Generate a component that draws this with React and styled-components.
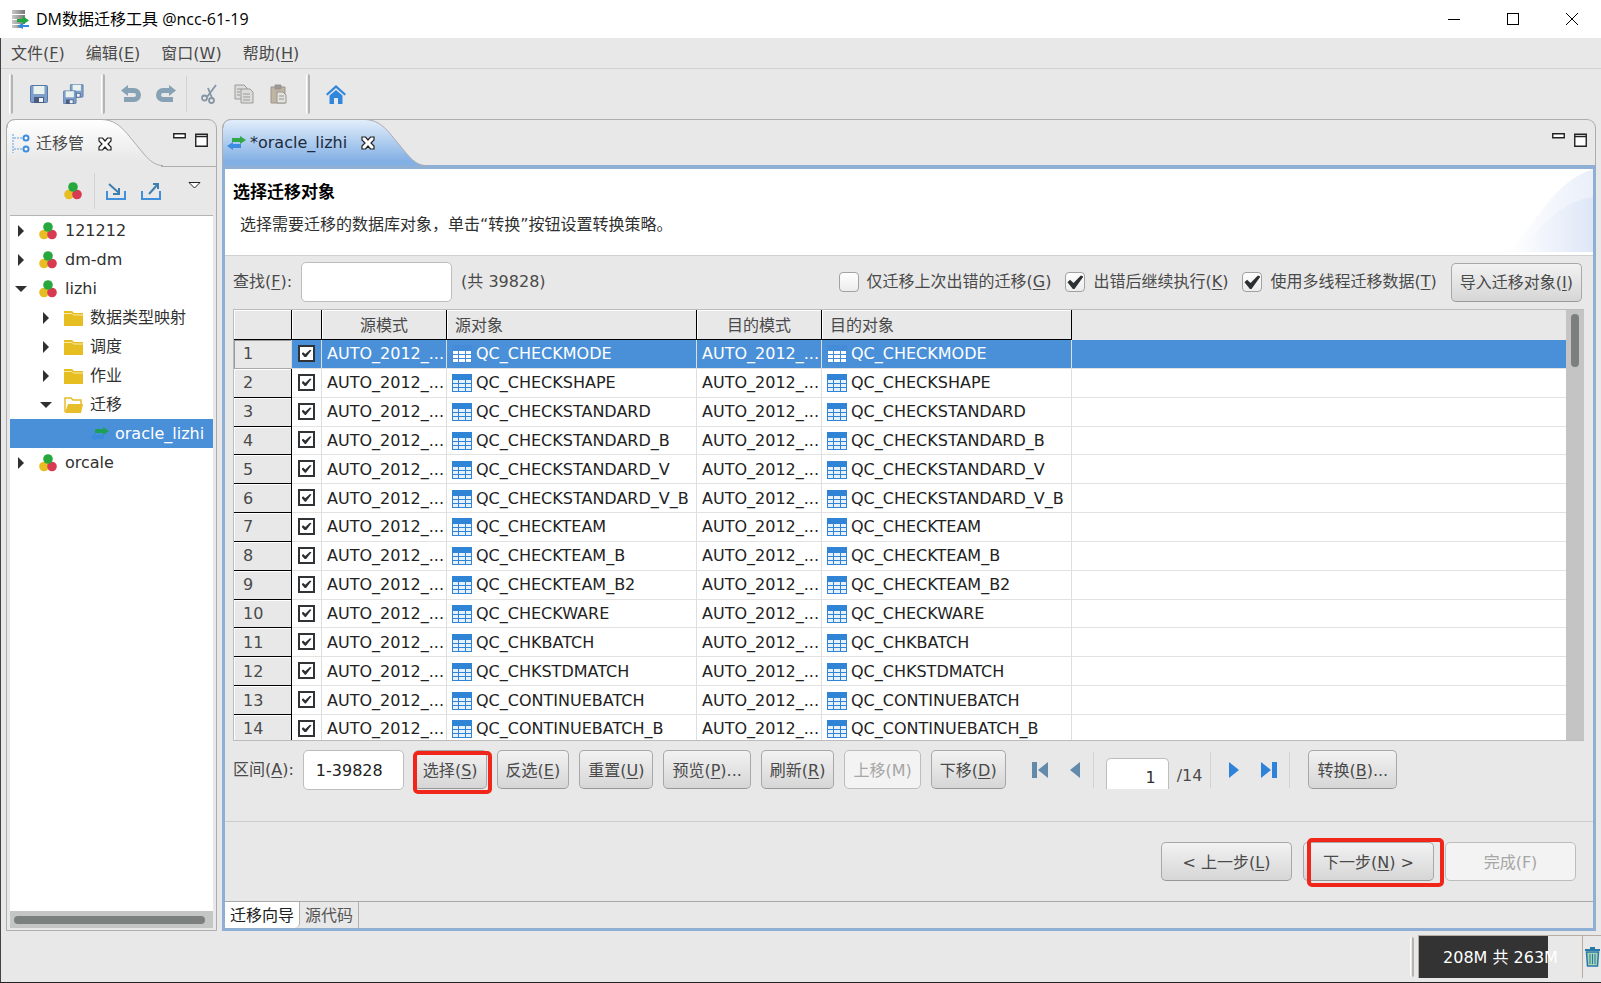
import React from "react";
import styled, { createGlobalStyle, css } from "styled-components";

const Global = createGlobalStyle`
  *, *::before, *::after { box-sizing: border-box; }
  body { margin: 0; }
  body, button, input {
    font-family: "DejaVu Sans", "Noto Sans CJK SC", sans-serif;
    font-size: 16px;
    line-height: 22px;
    color: #4a4a4a;
  }
  u { text-underline-offset: 2px; text-decoration-thickness: 1px; }
`;

const face = "#e8e8e8";
const select = "#4a90d9";

/* ---------- window frame ---------- */
const Window = styled.div`
  display: flex;
  flex-direction: column;
  height: 100vh;
  background: ${face};
  border-bottom: 1px solid #222;
`;
const TitleBar = styled.header`
  display: flex;
  align-items: center;
  flex: none;
  height: 38px;
  padding-left: 11px;
  background: #fff;
`;
const WindowTitle = styled.h1`
  flex: 1;
  margin: 0 0 0 7px;
  font: 400 16px/22px "Open Sans", "Noto Sans CJK SC", sans-serif;
  color: #000;
`;
const WindowButton = styled.button`
  display: grid;
  place-items: center;
  width: 59px;
  height: 38px;
  padding: 0;
  border: 0;
  background: none;
`;
const Frame = styled.div`
  display: flex;
  flex-direction: column;
  flex: 1;
  min-height: 0;
  border-left: 1px solid #444;
`;
const MenuBar = styled.nav`
  display: flex;
  align-items: center;
  flex: none;
  height: 31px;
  gap: 21px;
  padding: 2px 0 0 10px;
  border-bottom: 1px solid #d0d0d0;
`;
const MenuButton = styled.button`
  padding: 0;
  border: 0;
  background: none;
`;
const ToolBar = styled.div`
  display: flex;
  align-items: center;
  flex: none;
  height: 50px;
  padding-left: 8px;
`;
const Handle = styled.span`
  width: 4px;
  height: 40px;
  border-left: 1px solid #fff;
  border-right: 2px solid #b4b4b4;
  border-radius: 2px;
`;
const Separator = styled.span`
  width: 1px;
  height: 36px;
  background: #d2d2d2;
`;
const ToolGroup = styled.div`
  display: flex;
  align-items: center;
  padding: 0 ${(p) => p.$end || 8}px 0 ${(p) => p.$start || 8}px;
`;
const IconButton = styled.button`
  display: grid;
  place-items: center;
  width: ${(p) => p.$w || 35}px;
  height: 32px;
  padding: 0;
  border: 0;
  background: none;
  svg { display: block; }
`;

/* ---------- panels ---------- */
const Main = styled.main`
  display: flex;
  flex: 1;
  min-height: 0;
  gap: 5px;
  padding: 0 5px 1px;
`;
const SidePanel = styled.aside`
  display: flex;
  flex-direction: column;
  flex: none;
  width: 211px;
  border: 1px solid #adadad;
  border-radius: 9px 9px 0 0;
`;
const EditorPanel = styled.section`
  display: flex;
  flex-direction: column;
  flex: 1;
  min-width: 0;
`;
const PanelHead = styled.div`
  display: flex;
  justify-content: space-between;
  flex: none;
  height: 46px;
  ${(p) => p.$framed && css`
    border: 1px solid #adadad;
    border-bottom: 0;
    border-radius: 9px 9px 0 0;
  `}
`;
const PanelTab = styled.div`
  position: relative;
  display: flex;
  align-items: center;
  height: 100%;
  padding: 1px 0 0 4px;
  gap: 4px;
`;
const TabShape = styled.svg`
  position: absolute;
  left: 0;
  top: -1px;
  z-index: 0;
`;
const TabLabel = styled.span`
  position: relative;
  color: ${(p) => p.$color || "#4a4a4a"};
`;
const TabIcon = styled.span`
  position: relative;
  display: grid;
  width: ${(p) => p.$w || 19}px;
`;
const TabClose = styled.button`
  position: relative;
  display: grid;
  padding: 0;
  margin-left: 10px;
  border: 0;
  background: none;
`;
const PanelControls = styled.div`
  display: flex;
  align-items: flex-start;
  gap: 9px;
  padding: 13px 8px 0 0;
`;
const PanelControl = styled.button`
  display: grid;
  padding: 0;
  border: 0;
  background: none;
`;
/* line that continues the side tab's curve to the panel edge */
const SideRule = styled.div`
  display: flex;
  justify-content: flex-end;
  flex: none;
  height: 1px;
  span { width: 55px; background: #adadad; }
`;
const SideTools = styled.div`
  display: flex;
  align-items: center;
  flex: none;
  height: 48px;
  padding-left: 48px;
`;
const SideSeparator = styled(Separator)`
  margin: 0 3px;
`;
const ViewMenu = styled.button`
  display: grid;
  margin: 0 0 12px 20px;
  padding: 0;
  border: 0;
  background: none;
`;

/* ---------- tree ---------- */
const Tree = styled.ul`
  flex: 1;
  min-height: 0;
  margin: 0 3px;
  padding: 0;
  list-style: none;
  overflow: hidden;
  background: #fff;
  border-top: 1px solid #b4b4b4;
`;
const TreeRow = styled.li`
  display: flex;
  align-items: center;
  height: 29px;
  gap: ${(p) => (p.$level === 0 ? 8 : 6)}px;
  padding-left: ${(p) => [3, 28, 54][p.$level]}px;
  white-space: nowrap;
  color: ${(p) => (p.$selected ? "#fff" : "#303030")};
  background: ${(p) => (p.$selected ? select : "transparent")};
`;
const Twisty = styled.span`
  display: flex;
  align-items: center;
  padding-left: 3px;
  width: ${(p) => (p.$level === 0 ? 18 : 20)}px;
  padding-left: 2px;
`;
const HScroll = styled.div`
  flex: none;
  height: 17px;
  margin: 0 3px 2px;
  padding: 5px 8px 4px 4px;
  background: #c4c6c5;
`;
const ScrollThumb = styled.div`
  width: 100%;
  height: ${(p) => p.$h}px;
  border-radius: 4px;
  background: #7b7f7e;
`;

/* ---------- editor ---------- */
const EditorBody = styled.div`
  display: flex;
  flex-direction: column;
  flex: 1;
  min-height: 0;
  border: 3px solid #8fb0d4;
  border-top-width: 4px;
`;
const PageHead = styled.div`
  display: flex;
  justify-content: space-between;
  flex: none;
  height: 87px;
  background: #fff;
  border-bottom: 1px solid #d0d0d0;
`;
const PageText = styled.div`
  padding: 12px 8px;
`;
const PageTitle = styled.h2`
  margin: 0 0 11px;
  font-size: 17px;
  line-height: 22px;
  font-weight: 700;
  color: #000;
`;
const PageNote = styled.p`
  margin: 0 0 0 7px;
  color: #303030;
`;
const Content = styled.div`
  display: flex;
  flex-direction: column;
  flex: 1;
  min-height: 0;
  padding: 6px 9px 31px 8px;
`;
const SearchRow = styled.div`
  display: flex;
  align-items: center;
  flex: none;
  height: 40px;
  margin-bottom: 7px;
  white-space: nowrap;
`;
const Options = styled.div`
  display: flex;
  align-items: center;
  gap: 14px;
  margin-left: auto;
  padding-right: 2px;
`;
const FieldLabel = styled.label`
  margin-right: 9px;
  line-height: 40px;
`;
const TextField = styled.input`
  width: ${(p) => p.$w}px;
  height: 40px;
  padding: 0 12px;
  border: 1px solid #bdbdbd;
  border-radius: 5px;
  background: #fff;
  color: #222;
`;
const Total = styled.span`
  margin-left: 9px;
`;
const Option = styled.label`
  display: flex;
  align-items: center;
  gap: 8px;
`;
const checkMark = css`
  &:checked::before {
    content: "";
    width: ${(p) => (p.$small ? 10 : 16)}px;
    height: ${(p) => (p.$small ? 8 : 14)}px;
    background: #2c3033;
    clip-path: polygon(0 52%, 16% 34%, 38% 58%, 84% 4%, 100% 10%, 44% 100%, 34% 100%);
  }
`;
const OptionBox = styled.input`
  appearance: none;
  display: grid;
  place-items: center;
  width: 20px;
  height: 20px;
  margin: 0;
  border: 1px solid #a2a2a2;
  border-radius: 4px;
  background: linear-gradient(#fff, #ececec);
  ${checkMark}
`;
const Button = styled.button`
  flex: none;
  width: ${(p) => (p.$wide ? "131px" : "auto")};
  height: 39px;
  padding: 2px 8px 0;
  border: 1px solid #a8a8a8;
  border-bottom-color: #989898;
  border-radius: 5px;
  background: linear-gradient(#f2f2f2, #d6d6d6);
  white-space: nowrap;
  color: #4a4a4a;
  &:disabled {
    color: #a6a6a6;
    background: #f3f3f3;
    border-color: #bdbdbd;
  }
`;
const Marked = styled.div`
  position: relative;
  display: flex;
`;
const MarkFrame = styled.span`
  position: absolute;
  inset: ${(p) => p.$inset};
  border: 4px solid #f0261a;
  border-radius: 5px;
  pointer-events: none;
`;

/* ---------- grid ---------- */
const GridBox = styled.div`
  display: flex;
  flex: 1;
  min-height: 0;
  overflow: hidden;
  border: 1px solid #bcbcbc;
  border-right: 0;
`;
const GridView = styled.div`
  flex: 1;
  min-width: 0;
  overflow: hidden;
  background: #fff;
`;
const VScroll = styled.div`
  flex: none;
  width: 18px;
  padding: 4px 5px;
  background: #c4c4c4;
`;
/* the last row runs a little below the visible area */
const Grid = styled.table`
  width: 100%;
  height: calc(100% + 4px);
  table-layout: fixed;
  border-collapse: separate;
  border-spacing: 0;
`;
const HeadCell = styled.th`
  height: 30px;
  padding: 3px 8px 0;
  font-weight: 400;
  text-align: ${(p) => p.$align || "center"};
  background: ${face};
  ${(p) => !p.$rest && css`
    border-right: 1px solid #000;
    border-bottom: 1px solid #000;
    box-shadow: inset 1px 1px #fff;
  `}
`;
const NumberCell = styled.th`
  padding: 1px 8px 0 9px;
  font-weight: 400;
  text-align: left;
  color: #4a4a4a;
  background: ${face};
  border-right: ${(p) => (p.$current ? "1px solid #d8d8d8" : "1px solid #000")};
  border-bottom: 1px solid ${(p) => (p.$current ? "#a8a8a8" : "#000")};
  box-shadow: inset 1px 1px ${(p) => (p.$current ? "#999" : "#fff")};
`;
const Row = styled.tr`
  color: ${(p) => (p.$selected ? "#fff" : "#222")};
  background: ${(p) => (p.$selected ? select : "#fff")};
`;
const Cell = styled.td`
  height: 28px;
  padding: 1px 0 0 5px;
  overflow: hidden;
  white-space: nowrap;
  line-height: 20px;
  border-right: 1px solid #dedede;
  border-bottom: 1px solid #e2e2e2;
  &:last-child { border-right: 0; }
`;
const ObjectName = styled.span`
  display: flex;
  align-items: center;
  gap: 4px;
`;
const RowCheck = styled.input`
  appearance: none;
  display: grid;
  place-items: center;
  width: 17px;
  height: 17px;
  margin: 0 0 2px 1px;
  border: 2px solid #303436;
  background: #fff;
  ${checkMark}
`;

/* ---------- footer rows ---------- */
const Actions = styled.div`
  display: flex;
  flex: none;
  height: 40px;
  margin-top: 9px;
  gap: 10px;
  white-space: nowrap;
`;
const RangeField = styled.div`
  display: flex;
`;
const Pager = styled.div`
  display: flex;
  align-items: center;
  height: 39px;
  padding: 0 8px 0 7px;
`;
const PageField = styled.input`
  align-self: flex-end;
  width: 63px;
  height: 31px;
  margin: 0 8px 0 12px;
  padding: 6px 12px 0;
  text-align: right;
  border: 1px solid #bdbdbd;
  border-bottom: 0;
  border-radius: 5px 5px 0 0;
  background: #fff;
  color: #303030;
`;
const PageCount = styled.span`
  padding: 12px 8px 0 0;
`;
const Wizard = styled.div`
  display: flex;
  justify-content: flex-end;
  flex: none;
  gap: 11px;
  padding: 20px 17px;
  border-top: 1px solid #cdcdcd;
`;
const BottomTabs = styled.div`
  display: flex;
  flex: none;
  height: 27px;
  border-top: 1px solid #a8a8a8;
`;
const BottomTab = styled.button`
  padding: 1px 5px 0;
  border: 0;
  border-right: 1px solid #b0b0b0;
  border-radius: 0 0 ${(p) => (p.$active ? 5 : 0)}px 0;
  background: ${(p) => (p.$active ? "#fff" : "transparent")};
  color: ${(p) => (p.$active ? "#202020" : "#555")};
`;
const StatusBar = styled.footer`
  display: flex;
  justify-content: flex-end;
  flex: none;
  height: 50px;
  padding: 3px 0 4px;
`;
const StatusHandle = styled(Handle)`
  align-self: center;
  margin-right: 4px;
`;
const Heap = styled.div`
  width: 165px;
  border: 1px solid #b5aca4;
  border-bottom: 0;
  color: #fff;
  line-height: 44px;
  text-align: center;
  background: linear-gradient(to right, #333 79%, ${face} 79%);
`;
const TrashButton = styled(IconButton)`
  height: 43px;
  border-top: 1px solid #b5aca4;
`;

/* ---------- drawings ---------- */
const Logo = () => (
  <svg width="18" height="19" viewBox="0 0 18 19">
    <defs>
      <linearGradient id="server">
        <stop offset="0" stopColor="#c8c8c8" />
        <stop offset="1" stopColor="#777" />
      </linearGradient>
    </defs>
    <path d="M1 0h13v4H1zM1 5h13v4H1zM1 10h13v4H1zM1 15h11v3H1z" fill="url(#server)" />
    <path d="M6 9h6V6l6 4.500l-6 4V12H6z" fill="#20a840" />
    <path d="M18 15h-6v-2l-6 3l6 3v-2h6z" fill="#3388dd" />
  </svg>
);
const Arrows = ({ dim }) => (
  <svg width="19" height="14" viewBox="0 0 19 14">
    <path d="M5 2h8V0l6 4l-6 4V6H5z" fill={dim ? "#1e9f58" : "#2fa84a"} />
    <path d="M14 8H6V6L0 10l6 4v-2h8z" fill={dim ? "#3a8cdb" : "#3d8de0"} />
  </svg>
);
const Balls = () => (
  <svg width="18" height="18" viewBox="0 0 18 18">
    <circle cx="5" cy="12.500" r="4.800" fill="#e6bd22" />
    <circle cx="13" cy="12.500" r="4.800" fill="#d83a52" />
    <circle cx="9" cy="5" r="4.800" fill="#27a83c" />
  </svg>
);
const Folder = ({ open }) => (
  <svg width="20" height="18" viewBox="0 0 20 18">
    {open ? (
      <>
        <path d="M1 16V2h6l2 2h8v4" fill="#fff" stroke="#e4bb26" strokeWidth="1.500" />
        <path d="M4 8h15l-2 9H1z" fill="#e6be2a" />
      </>
    ) : (
      <>
        <path d="M0 2h8l2 2h9v13H0z" fill="#e6be22" />
        <path d="M0 4.500h8l1.500 1.500H19" fill="none" stroke="#f7e9a8" />
      </>
    )}
  </svg>
);
const TableIcon = ({ selected }) => (
  <svg width="20" height="18" viewBox="0 0 20 18">
    <rect width="20" height="18" fill={selected ? "#448cd8" : "#2f84d6"} />
    <path
      d="M1 6h5v3H1zM7 6h6v3H7zM14 6h5v3h-5zM1 10h5v3H1zM7 10h6v3H7zM14 10h5v3h-5zM1 14h5v3H1zM7 14h6v3H7zM14 14h5v3h-5z"
      fill={selected ? "#fff" : "#e6f1fc"}
    />
  </svg>
);
const Triangle = ({ open }) => (
  <svg width="12" height="12" viewBox="0 0 12 12">
    <path d={open ? "M0 3h12L6 9z" : "M3 0l6 6l-6 6z"} fill="#303030" />
  </svg>
);
const CloseMark = () => (
  <svg width="14" height="14" viewBox="0 0 14 14">
    <path d="M1 1h3.500L7 4l2.500-3H13v3L10 7l3 3v3H9.500L7 10l-2.500 3H1v-3l3-3l-3-3z" fill="#fff" stroke="#222" strokeWidth="1.200" />
  </svg>
);
const MinMark = () => (
  <svg width="13" height="6" viewBox="0 0 13 6">
    <path d="M.75.75h11.500v4H.75z" fill="#fff" stroke="#222" strokeWidth="1.400" />
  </svg>
);
const MaxMark = () => (
  <svg width="13" height="14" viewBox="0 0 13 14">
    <path d="M.75 1.250h11.500v12H.75zM.75 3.500h11.500" fill="#fff" stroke="#222" strokeWidth="1.400" />
  </svg>
);
const TreeMark = () => (
  <svg width="19" height="19" viewBox="0 0 19 19">
    <path d="M2 0v19M3 4h9M3 15h9" stroke="#5a9ee4" strokeDasharray="2 1" fill="none" />
    <circle cx="15" cy="4" r="2.500" fill="#fff" stroke="#3f8ddd" strokeWidth="2" />
    <circle cx="15" cy="15" r="2.500" fill="#fff" stroke="#3f8ddd" strokeWidth="2" />
  </svg>
);
const DiskShape = ({ x = 0, y = 0, s = 1 }) => (
  <g transform={`translate(${x} ${y}) scale(${s})`}>
    <rect x=".5" y=".5" width="17" height="17" rx="1" fill="#7d9fca" stroke="#5478a8" />
    <rect x="3.500" y="1" width="11" height="8" fill="#eaf2ee" />
    <rect x="4" y="12" width="10" height="6" fill="#4a5c80" />
    <rect x="9" y="13" width="4" height="4" fill="#f0f3f8" />
  </g>
);
const Save = () => (
  <svg width="18" height="18" viewBox="0 0 18 18"><DiskShape /></svg>
);
const SaveAll = () => (
  <svg width="21" height="20" viewBox="0 0 21 20">
    <DiskShape x={7} s={0.75} />
    <DiskShape y={6.5} s={0.75} />
  </svg>
);
const Turn = ({ flip }) => (
  <svg width="20" height="18" viewBox="0 0 20 18">
    <g transform={flip ? "matrix(-1 0 0 1 20 0)" : undefined}>
      <path d="M6 5.500h7a4.500 4.500 0 0 1 0 9H3" fill="none" stroke="#86a2b4" strokeWidth="5" />
      <path d="M0 5.500l7-5.500v11z" fill="#86a2b4" />
    </g>
  </svg>
);
const Cut = () => (
  <svg width="16" height="20" viewBox="0 0 16 20" fill="none" stroke="#8796a4" strokeWidth="1.800">
    <path d="M15 1L6 13M7 4l4 10" />
    <circle cx="3.500" cy="14" r="2.500" />
    <circle cx="10.500" cy="16.500" r="2.500" />
  </svg>
);
const Copy = () => (
  <svg width="20" height="20" viewBox="0 0 20 20" fill="#dcdcda" stroke="#9a9a98">
    <path d="M1 1h9l3 3v11H1z" />
    <path d="M7 5h9l3 3v11H7z" />
    <path d="M3 5h4M3 8h3M3 11h3M9 10h7M9 13h7M9 16h7" />
  </svg>
);
const Paste = () => (
  <svg width="17" height="20" viewBox="0 0 17 20" stroke="#9a958c">
    <path d="M1 3h14v16H1z" fill="#c0b5a4" />
    <path d="M5 1h6v4H5z" fill="#999" />
    <path d="M7 8h6l3 3v8H7z" fill="#e2e2e0" />
    <path d="M9 12h5M9 15h5" />
  </svg>
);
const Home = () => (
  <svg width="20" height="19" viewBox="0 0 20 19">
    <path d="M0 9L10 0l10 9l-1.500 1.500L10 3L1.500 10.500z" fill="#2f86dc" />
    <path d="M3.500 10.500L10 5l6.500 5.500V19H12v-6H8v6H3.500z" fill="#2f86dc" />
  </svg>
);
const Transfer = ({ out }) => (
  <svg width="20" height="18" viewBox="0 0 20 18" fill="none" stroke="#3f8fdc" strokeWidth="2">
    <path d="M1 9v8h18V9" />
    {out ? <path d="M8 12l9-10M12 2h5v5" stroke="#3f7fb0" /> : <path d="M3 2l10 9M13 6v6H7" stroke="#3f7fb0" />}
  </svg>
);
const PageArrow = ({ back, bar, dim }) => (
  <svg width={bar ? 16 : 10} height="16" viewBox={bar ? "0 0 16 16" : "0 0 10 16"}>
    <g transform={back ? `matrix(-1 0 0 1 ${bar ? 16 : 10} 0)` : undefined} fill={dim ? "#638aaa" : "#2f82da"}>
      <path d="M0 0l10 8l-10 8z" />
      {bar && <rect x="11" width="5" height="16" />}
    </g>
  </svg>
);
const Trash = () => (
  <svg width="15" height="20" viewBox="0 0 15 20">
    <path d="M1.500 5h12l-1 14h-10z" fill="#a4d4b0" stroke="#2878a8" strokeWidth="1.500" />
    <path d="M5 7v10M7.500 7v10M10 7v10" stroke="#2878a8" />
    <path d="M0 3h15M5 1h5" stroke="#2878a8" strokeWidth="2" />
  </svg>
);
const Swoosh = () => (
  <svg width="92" height="83" viewBox="0 0 92 83">
    <defs>
      <linearGradient id="swoosh">
        <stop offset="0" stopColor="#fff" />
        <stop offset="1" stopColor="#dbe4f6" />
      </linearGradient>
    </defs>
    <path d="M6 83C36 58 48 15 92 0V83z" fill="url(#swoosh)" opacity=".6" />
    <path d="M10 83C38 70 48 35 92 28V83z" fill="url(#swoosh)" opacity=".8" />
  </svg>
);
const TabBack = ({ start, id, top, bottom }) => {
  const edge = `V9Q0 .5 9 .5H${start}c12 0 19 6 26 14l14 17c8 10 14 15 22 15`;
  return (
    <TabShape width={start + 62} height="47" viewBox={`0 0 ${start + 62} 47`}>
      <defs>
        <linearGradient id={id} x1="0" y1="0" x2="0" y2="1">
          <stop offset="0" stopColor={top} />
          <stop offset=".9" stopColor={bottom} />
        </linearGradient>
      </defs>
      <path d={`M0 47${edge}`} fill={`url(#${id})`} />
      <path d={`M0 9${edge}`} fill="none" stroke="#adadad" />
    </TabShape>
  );
};

/* ---------- data ---------- */
const menus = [["文件", "F"], ["编辑", "E"], ["窗口", "W"], ["帮助", "H"]];
const tree = [
  { level: 0, label: "121212" },
  { level: 0, label: "dm-dm" },
  { level: 0, label: "lizhi", open: true },
  { level: 1, label: "数据类型映射" },
  { level: 1, label: "调度" },
  { level: 1, label: "作业" },
  { level: 1, label: "迁移", open: true },
  { level: 2, label: "oracle_lizhi", selected: true },
  { level: 0, label: "orcale" },
];
const objects = [
  "QC_CHECKMODE", "QC_CHECKSHAPE", "QC_CHECKSTANDARD", "QC_CHECKSTANDARD_B",
  "QC_CHECKSTANDARD_V", "QC_CHECKSTANDARD_V_B", "QC_CHECKTEAM", "QC_CHECKTEAM_B",
  "QC_CHECKTEAM_B2", "QC_CHECKWARE", "QC_CHKBATCH", "QC_CHKSTDMATCH",
  "QC_CONTINUEBATCH", "QC_CONTINUEBATCH_B",
];
const options = [
  { text: "仅迁移上次出错的迁移", k: "G", on: false },
  { text: "出错后继续执行", k: "K", on: true },
  { text: "使用多线程迁移数据", k: "T", on: true },
];
const actions = [
  { text: "反选", k: "E" },
  { text: "重置", k: "U" },
  { text: "预览", k: "P", more: "..." },
  { text: "刷新", k: "R" },
  { text: "上移", k: "M", off: true },
  { text: "下移", k: "D" },
];

const Key = ({ k, plain }) => <>({plain ? k : <u>{k}</u>})</>;

const treeIcon = (n) =>
  n.level === 0 ? <Balls /> : n.level === 1 ? <Folder open={n.open} /> : <Arrows dim />;

export default function App() {
  return (
    <Window>
      <Global />
      <TitleBar>
        <Logo />
        <WindowTitle>DM数据迁移工具 @ncc-61-19</WindowTitle>
        <WindowButton aria-label="最小化">
          <svg width="12" height="12"><path d="M0 6.500h12" stroke="#000" /></svg>
        </WindowButton>
        <WindowButton aria-label="最大化">
          <svg width="12" height="12"><rect x=".5" y=".5" width="11" height="11" fill="none" stroke="#000" /></svg>
        </WindowButton>
        <WindowButton aria-label="关闭">
          <svg width="12" height="12"><path d="M0 0l12 12M12 0L0 12" stroke="#000" /></svg>
        </WindowButton>
      </TitleBar>
      <Frame>
        <MenuBar>
          {menus.map(([text, k]) => (
            <MenuButton key={k}>{text}<Key k={k} /></MenuButton>
          ))}
        </MenuBar>
        <ToolBar>
          <Handle />
          <ToolGroup $end={10}>
            <IconButton aria-label="保存"><Save /></IconButton>
            <IconButton aria-label="全部保存"><SaveAll /></IconButton>
          </ToolGroup>
          <Handle />
          <ToolGroup $start={8} $end={3}>
            <IconButton aria-label="撤销"><Turn /></IconButton>
            <IconButton aria-label="重做"><Turn flip /></IconButton>
          </ToolGroup>
          <Separator />
          <ToolGroup $start={4} $end={10}>
            <IconButton aria-label="剪切"><Cut /></IconButton>
            <IconButton aria-label="复制"><Copy /></IconButton>
            <IconButton aria-label="粘贴"><Paste /></IconButton>
          </ToolGroup>
          <Handle />
          <ToolGroup>
            <IconButton aria-label="主页"><Home /></IconButton>
          </ToolGroup>
        </ToolBar>
        <Main>
          <SidePanel>
            <PanelHead>
              <PanelTab>
                <TabBack start={94} id="sideTab" top="#ffffff" bottom="#e8e8e8" />
                <TabIcon $w={21}><TreeMark /></TabIcon>
                <TabLabel>迁移管</TabLabel>
                <TabClose aria-label="关闭"><CloseMark /></TabClose>
              </PanelTab>
              <PanelControls>
                <PanelControl aria-label="最小化"><MinMark /></PanelControl>
                <PanelControl aria-label="最大化"><MaxMark /></PanelControl>
              </PanelControls>
            </PanelHead>
            <SideRule>
              <span />
            </SideRule>
            <SideTools>
              <IconButton $w={36} aria-label="新建"><Balls /></IconButton>
              <SideSeparator />
              <IconButton aria-label="导入"><Transfer /></IconButton>
              <IconButton aria-label="导出"><Transfer out /></IconButton>
              <ViewMenu aria-label="视图菜单">
                <svg width="13" height="7"><path d="M1 .5h11L6.500 6z" fill="#fff" stroke="#222" /></svg>
              </ViewMenu>
            </SideTools>
            <Tree>
              {tree.map((n) => (
                <TreeRow key={n.label} $level={n.level} $selected={n.selected}>
                  <Twisty $level={n.level}>{n.level < 2 && <Triangle open={n.open} />}</Twisty>
                  {treeIcon(n)}
                  <span>{n.label}</span>
                </TreeRow>
              ))}
            </Tree>
            <HScroll><ScrollThumb $h={8} /></HScroll>
          </SidePanel>

          <EditorPanel>
            <PanelHead $framed>
              <PanelTab>
                <TabBack start={141} id="editorTab" top="#e3eefb" bottom="#82afe4" />
                <TabIcon><Arrows /></TabIcon>
                <TabLabel $color="#1d2c3c">*oracle_lizhi</TabLabel>
                <TabClose aria-label="关闭"><CloseMark /></TabClose>
              </PanelTab>
              <PanelControls>
                <PanelControl aria-label="最小化"><MinMark /></PanelControl>
                <PanelControl aria-label="最大化"><MaxMark /></PanelControl>
              </PanelControls>
            </PanelHead>
            <EditorBody>
              <PageHead>
                <PageText>
                  <PageTitle>选择迁移对象</PageTitle>
                  <PageNote>选择需要迁移的数据库对象，单击“转换”按钮设置转换策略。</PageNote>
                </PageText>
                <Swoosh />
              </PageHead>
              <Content>
                <SearchRow>
                  <FieldLabel htmlFor="find">查找<Key k="F" />:</FieldLabel>
                  <TextField id="find" $w={151} />
                  <Total>(共 39828)</Total>
                  <Options>
                    {options.map((o) => (
                      <Option key={o.k}>
                        <OptionBox type="checkbox" defaultChecked={o.on} />
                        <span>{o.text}<Key k={o.k} /></span>
                      </Option>
                    ))}
                    <Button>导入迁移对象<Key k="I" /></Button>
                  </Options>
                </SearchRow>
                <GridBox>
                  <GridView>
                    <Grid>
                      <colgroup>
                        <col width="58" />
                        <col width="30" />
                        <col width="125" />
                        <col width="250" />
                        <col width="125" />
                        <col width="250" />
                        <col />
                      </colgroup>
                      <thead>
                        <tr>
                          <HeadCell />
                          <HeadCell />
                          <HeadCell>源模式</HeadCell>
                          <HeadCell $align="left">源对象</HeadCell>
                          <HeadCell>目的模式</HeadCell>
                          <HeadCell $align="left">目的对象</HeadCell>
                          <HeadCell $rest />
                        </tr>
                      </thead>
                      <tbody>
                        {objects.map((name, i) => (
                          <Row key={name} $selected={i === 0}>
                            <NumberCell scope="row" $current={i === 0}>{i + 1}</NumberCell>
                            <Cell>
                              <RowCheck type="checkbox" $small defaultChecked aria-label={name} />
                            </Cell>
                            <Cell>AUTO_2012_...</Cell>
                            <Cell><ObjectName><TableIcon selected={i === 0} />{name}</ObjectName></Cell>
                            <Cell>AUTO_2012_...</Cell>
                            <Cell><ObjectName><TableIcon selected={i === 0} />{name}</ObjectName></Cell>
                            <Cell />
                          </Row>
                        ))}
                      </tbody>
                    </Grid>
                  </GridView>
                  <VScroll><ScrollThumb $h={53} /></VScroll>
                </GridBox>
                <Actions>
                  <RangeField>
                    <FieldLabel htmlFor="range">区间<Key k="A" />:</FieldLabel>
                    <TextField id="range" $w={101} defaultValue="1-39828" />
                  </RangeField>
                  <Marked>
                    <Button>选择<Key k="S" /></Button>
                    <MarkFrame $inset="1px -5px -4px -1px" />
                  </Marked>
                  {actions.map((a) => (
                    <Button key={a.k} disabled={a.off}>{a.text}<Key k={a.k} plain={a.off} />{a.more}</Button>
                  ))}
                  <Pager>
                    <IconButton aria-label="首页"><PageArrow back bar dim /></IconButton>
                    <IconButton aria-label="上一页"><PageArrow back dim /></IconButton>
                    <Separator />
                    <PageField aria-label="页码" defaultValue="1" />
                    <PageCount>/14</PageCount>
                    <Separator />
                    <ToolGroup $start={5} $end={3}>
                      <IconButton aria-label="下一页"><PageArrow /></IconButton>
                      <IconButton aria-label="末页"><PageArrow bar /></IconButton>
                    </ToolGroup>
                    <Separator />
                  </Pager>
                  <Button>转换<Key k="B" />...</Button>
                </Actions>
              </Content>
              <Wizard>
                <Button $wide>&lt; 上一步<Key k="L" /></Button>
                <Marked>
                  <Button $wide>下一步<Key k="N" /> &gt;</Button>
                  <MarkFrame $inset="-4px -10px -6px 4px" />
                </Marked>
                <Button $wide disabled>完成<Key k="F" plain /></Button>
              </Wizard>
              <BottomTabs>
                <BottomTab $active>迁移向导</BottomTab>
                <BottomTab>源代码</BottomTab>
              </BottomTabs>
            </EditorBody>
          </EditorPanel>
        </Main>
        <StatusBar>
          <StatusHandle />
          <Heap>208M 共 263M</Heap>
          <TrashButton $w={18} aria-label="回收内存"><Trash /></TrashButton>
        </StatusBar>
      </Frame>
    </Window>
  );
}
